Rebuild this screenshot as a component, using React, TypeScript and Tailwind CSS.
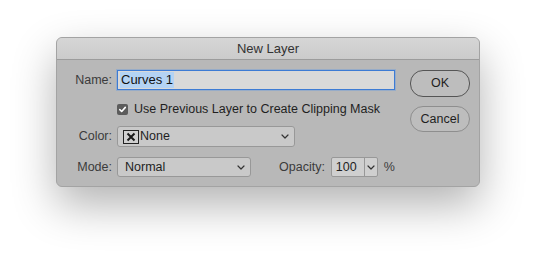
import React from 'react';

const Chevron = ({ className = '' }: { className?: string }) => (
  <svg width="8" height="5" viewBox="0 0 8 5" className={className}>
    <path d="M1 1 L4 4 L7 1" fill="none" stroke="#333" strokeWidth="1.2" strokeLinecap="round" strokeLinejoin="round" />
  </svg>
);

const NoColorIcon = () => (
  <span className="flex items-center justify-center w-[16px] h-[14px] border border-[#222] bg-[#d0d0d0]">
    <svg width="10" height="10" viewBox="0 0 10 10">
      <path d="M1.5 1.5 L8.5 8.5 M8.5 1.5 L1.5 8.5" stroke="#1a1a1a" strokeWidth="2" />
    </svg>
  </span>
);

const Label = ({ children }: { children: React.ReactNode }) => (
  <span className="w-[60px] pr-[5px] text-right text-[#3b3b3b] shrink-0">{children}</span>
);

export default function App() {
  return (
    <div
      className="w-[536px] h-[262px] bg-white pt-[37px] pl-[56px] text-[12.5px] text-[#1f1f1f]"
      style={{ fontFamily: '"Liberation Sans", Arial, sans-serif' }}
    >
      <div className="w-[424px] h-[150px] rounded-[6px] bg-[#b8b8b8] border border-[#a3a3a3] shadow-[0_18px_44px_rgba(0,0,0,0.3)] overflow-hidden flex flex-col">
        {/* title bar */}
        <div className="h-[22px] shrink-0 bg-gradient-to-b from-[#d6d6d6] to-[#cbcbcb] border-b border-[#9c9c9c] flex items-center justify-center text-[13px] text-[#333]">
          New Layer
        </div>

        <div className="flex pt-[10px]">
          {/* fields */}
          <div className="flex flex-col w-[353px]">
            <div className="flex items-center h-[20px]">
              <Label>Name:</Label>
              <div className="w-[278px] h-[20px] bg-[#d9d9d9] border border-[#3d7bd4] shadow-[0_0_0_1px_rgba(90,150,230,0.35)] flex items-center pl-[2px]">
                <span className="bg-[#b4d3f4] px-[1px] leading-[16px] text-[13px] text-[#111]">Curves 1</span>
              </div>
            </div>

            <div className="flex items-center mt-[13px] h-[12px] pl-[60px]">
              <span className="w-[11px] h-[11px] rounded-[2px] bg-[#5c5c5c] flex items-center justify-center">
                <svg width="9" height="9" viewBox="0 0 9 9">
                  <path d="M1.8 4.6 L3.7 6.5 L7.3 2.4" fill="none" stroke="white" strokeWidth="1.6" strokeLinecap="round" strokeLinejoin="round" />
                </svg>
              </span>
              <span className="ml-[6px]">Use Previous Layer to Create Clipping Mask</span>
            </div>

            <div className="flex items-center mt-[11px] h-[21px]">
              <Label>Color:</Label>
              <div className="w-[178px] h-[21px] rounded-[3px] bg-[#c9c9c9] border border-[#989898] flex items-center pl-[5px] pr-[5px]">
                <NoColorIcon />
                <span className="ml-[1px] flex-1">None</span>
                <Chevron />
              </div>
            </div>

            <div className="flex items-center mt-[10px] h-[20px]">
              <Label>Mode:</Label>
              <div className="w-[134px] h-[20px] rounded-[3px] bg-[#c9c9c9] border border-[#989898] flex items-center pl-[7px] pr-[5px]">
                <span className="flex-1">Normal</span>
                <Chevron />
              </div>
              <span className="ml-[28px] text-[#3b3b3b]">Opacity:</span>
              <div className="ml-[6px] w-[47px] h-[20px] rounded-[2px] bg-[#cfcfcf] border border-[#989898] flex items-center">
                <span className="flex-1 pl-[4px]">100</span>
                <span className="w-[13px] h-full border-l border-[#989898] flex items-center justify-center">
                  <Chevron />
                </span>
              </div>
              <span className="ml-[6px] text-[#3b3b3b]">%</span>
            </div>
          </div>

          {/* buttons */}
          <div className="flex flex-col gap-[9px] pt-0">
            <button className="w-[60px] h-[27px] rounded-[13px] border border-[#555] bg-[#bdbdbd] text-[#1f1f1f]">
              OK
            </button>
            <button className="w-[60px] h-[26px] rounded-[13px] border border-[#8e8e8e] bg-[#bdbdbd] text-[#1f1f1f]">
              Cancel
            </button>
          </div>
        </div>
      </div>
    </div>
  );
}
